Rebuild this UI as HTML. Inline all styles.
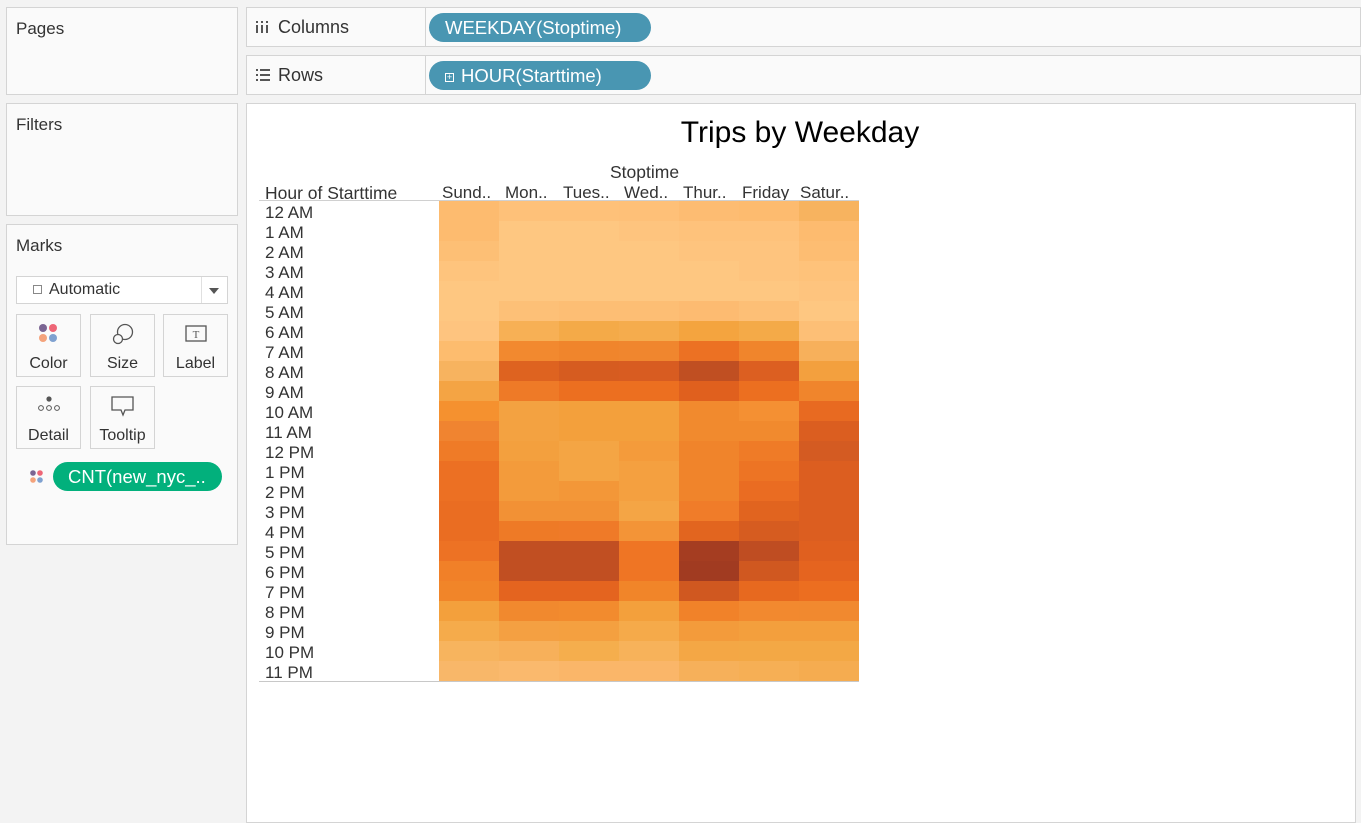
<!DOCTYPE html>
<html><head><meta charset="utf-8"><style>
*{margin:0;padding:0;box-sizing:border-box}
body{width:1361px;height:811px;background:#f3f3f3;font-family:"Liberation Sans",sans-serif;color:#333;position:relative;overflow:hidden}
.box{position:absolute;background:#fafafa;border:1px solid #d4d4d4}
.t{position:absolute;white-space:nowrap}
.pill{position:absolute;border-radius:15px;color:#fff;font-size:18.5px;line-height:29px;height:29px;white-space:nowrap}
.btn{position:absolute;width:65px;height:63px;border:1px solid #d4d4d4;background:#fafafa;font-size:16px;text-align:center}
.btn span{position:absolute;left:0;right:0;top:40px;line-height:18px}
#hm{position:absolute;left:439px;top:201px;width:420px;height:480px;display:grid;grid-template-columns:repeat(7,60px);grid-template-rows:repeat(24,20px)}
.rl{position:absolute;left:265px;font-size:17px;line-height:20px;color:#333;padding-top:2px}
.h{position:absolute;top:183px;font-size:17px;white-space:nowrap}
</style></head><body>
<div class="box" style="left:6px;top:7px;width:232px;height:88px"></div>
<div class="t" style="left:16px;top:19px;font-size:17px">Pages</div>
<div class="box" style="left:6px;top:103px;width:232px;height:113px"></div>
<div class="t" style="left:16px;top:115px;font-size:17px">Filters</div>
<div class="box" style="left:6px;top:224px;width:232px;height:321px"></div>
<div class="t" style="left:16px;top:236px;font-size:17px">Marks</div>
<div style="position:absolute;left:16px;top:276px;width:212px;height:28px;border:1px solid #d4d4d4;background:#fff"></div>
<div style="position:absolute;left:201px;top:277px;width:1px;height:26px;background:#e0e0e0"></div>
<div style="position:absolute;left:33px;top:285px;width:9px;height:9px;border:1px solid #888"></div>
<div class="t" style="left:49px;top:281px;font-size:16px">Automatic</div>
<div style="position:absolute;left:209px;top:288px;border-left:5px solid transparent;border-right:5px solid transparent;border-top:6px solid #555"></div>
<div class="btn" style="left:16px;top:314px"><svg width="22" height="22" viewBox="0 0 22 22" style="position:absolute;left:21px;top:8px"><circle cx="5" cy="5" r="4" fill="#7b6593"/><circle cx="15" cy="5" r="4" fill="#ee6677"/><circle cx="5" cy="15" r="4" fill="#f4a37c"/><circle cx="15" cy="15" r="4" fill="#7fa1d0"/></svg><span>Color</span></div>
<div class="btn" style="left:90px;top:314px"><svg width="24" height="24" viewBox="0 0 24 24" style="position:absolute;left:20px;top:7px"><circle cx="14" cy="10" r="7.5" fill="none" stroke="#555" stroke-width="1.3"/><circle cx="7" cy="17" r="4.5" fill="#fafafa" stroke="#555" stroke-width="1.3"/></svg><span>Size</span></div>
<div class="btn" style="left:163px;top:314px"><svg width="22" height="20" viewBox="0 0 22 20" style="position:absolute;left:21px;top:10px"><rect x="1" y="1" width="20" height="15" fill="none" stroke="#555" stroke-width="1.3"/><text x="11" y="13" font-size="11" text-anchor="middle" font-family="Liberation Serif" fill="#555">T</text></svg><span>Label</span></div>
<div class="btn" style="left:16px;top:386px"><svg width="26" height="20" viewBox="0 0 26 20" style="position:absolute;left:19px;top:8px"><circle cx="13" cy="4" r="2.6" fill="#555"/><circle cx="5" cy="13" r="2.4" fill="none" stroke="#555"/><circle cx="13" cy="13" r="2.4" fill="none" stroke="#555"/><circle cx="21" cy="13" r="2.4" fill="none" stroke="#555"/></svg><span>Detail</span></div>
<div class="btn" style="left:90px;top:386px"><svg width="24" height="22" viewBox="0 0 24 22" style="position:absolute;left:20px;top:9px"><path d="M1 1H22V14H14L12 19L10 14H1Z" fill="none" stroke="#555" stroke-width="1.3"/></svg><span>Tooltip</span></div>
<svg width="16" height="16" viewBox="0 0 16 16" style="position:absolute;left:29px;top:469px"><circle cx="4" cy="4" r="2.8" fill="#7b6593"/><circle cx="11" cy="4" r="2.8" fill="#ee6677"/><circle cx="4" cy="11" r="2.8" fill="#f4a37c"/><circle cx="11" cy="11" r="2.8" fill="#7fa1d0"/></svg>
<div class="pill" style="left:53px;top:462px;width:169px;background:#02b07c;padding-left:15px;font-size:18.5px">CNT(new_nyc_..</div>

<div class="box" style="left:246px;top:7px;width:1115px;height:40px"></div>
<div style="position:absolute;left:425px;top:8px;width:1px;height:38px;background:#d4d4d4"></div>
<svg width="12" height="12" viewBox="0 0 12 12" style="position:absolute;left:256px;top:21px"><rect x="0" y="0" width="2" height="2" fill="#555"/><rect x="0" y="4" width="2" height="8" fill="#555"/><rect x="5" y="0" width="2" height="2" fill="#555"/><rect x="5" y="4" width="2" height="8" fill="#555"/><rect x="10" y="0" width="2" height="2" fill="#555"/><rect x="10" y="4" width="2" height="8" fill="#555"/></svg>
<div class="t" style="left:278px;top:17px;font-size:18px">Columns</div>
<div class="pill" style="left:429px;top:13px;width:222px;background:#4996b2;padding-left:16px">WEEKDAY(Stoptime)</div>
<div class="box" style="left:246px;top:55px;width:1115px;height:40px"></div>
<div style="position:absolute;left:425px;top:56px;width:1px;height:38px;background:#d4d4d4"></div>
<svg width="14" height="12" viewBox="0 0 14 12" style="position:absolute;left:256px;top:69px"><rect x="0" y="0" width="2" height="2" fill="#555"/><rect x="4" y="0" width="10" height="2" fill="#555"/><rect x="0" y="5" width="2" height="2" fill="#555"/><rect x="4" y="5" width="10" height="2" fill="#555"/><rect x="0" y="10" width="2" height="2" fill="#555"/><rect x="4" y="10" width="10" height="2" fill="#555"/></svg>
<div class="t" style="left:278px;top:65px;font-size:18px">Rows</div>
<div class="pill" style="left:429px;top:61px;width:222px;background:#4996b2;padding-left:16px"><span style="display:inline-block;width:9px;height:9px;border:1px solid #fff;font-size:9px;line-height:7px;text-align:center;vertical-align:2px;margin-right:7px">+</span>HOUR(Starttime)</div>

<div style="position:absolute;left:246px;top:103px;width:1110px;height:720px;background:#fff;border:1px solid #d4d4d4"></div>
<div class="t" style="left:0;width:1600px;text-align:center;top:116px;font-size:30px;color:#000">Trips by Weekday</div>
<div class="t" style="left:610px;top:162px;font-size:17.5px">Stoptime</div>
<div class="h" style="left:265px;font-size:17.5px">Hour of Starttime</div>
<div class="h" style="left:442px">Sund..</div>
<div class="h" style="left:505px">Mon..</div>
<div class="h" style="left:563px">Tues..</div>
<div class="h" style="left:624px">Wed..</div>
<div class="h" style="left:683px">Thur..</div>
<div class="h" style="left:742px">Friday</div>
<div class="h" style="left:800px">Satur..</div>
<div style="position:absolute;left:259px;top:200px;width:600px;height:1px;background:#d0d0d0"></div>
<div style="position:absolute;left:259px;top:681px;width:600px;height:1px;background:#c8c8c8"></div>
<div class="rl" style="top:201px">12 AM</div><div class="rl" style="top:221px">1 AM</div><div class="rl" style="top:241px">2 AM</div><div class="rl" style="top:261px">3 AM</div><div class="rl" style="top:281px">4 AM</div><div class="rl" style="top:301px">5 AM</div><div class="rl" style="top:321px">6 AM</div><div class="rl" style="top:341px">7 AM</div><div class="rl" style="top:361px">8 AM</div><div class="rl" style="top:381px">9 AM</div><div class="rl" style="top:401px">10 AM</div><div class="rl" style="top:421px">11 AM</div>
<div class="rl" style="top:441px">12 PM</div><div class="rl" style="top:461px">1 PM</div><div class="rl" style="top:481px">2 PM</div><div class="rl" style="top:501px">3 PM</div><div class="rl" style="top:521px">4 PM</div><div class="rl" style="top:541px">5 PM</div><div class="rl" style="top:561px">6 PM</div><div class="rl" style="top:581px">7 PM</div><div class="rl" style="top:601px">8 PM</div><div class="rl" style="top:621px">9 PM</div><div class="rl" style="top:641px">10 PM</div><div class="rl" style="top:661px">11 PM</div>
<div id="hm">
<i style="background:#fdbb6f"></i><i style="background:#fec179"></i><i style="background:#fec179"></i><i style="background:#fec078"></i><i style="background:#fdbc72"></i><i style="background:#fdbb6f"></i><i style="background:#f7b35f"></i>
<i style="background:#fdbb6f"></i><i style="background:#fec781"></i><i style="background:#fec781"></i><i style="background:#fec47e"></i><i style="background:#fec27b"></i><i style="background:#fec27b"></i><i style="background:#fdbb6f"></i>
<i style="background:#fdbf75"></i><i style="background:#fec781"></i><i style="background:#fec781"></i><i style="background:#fec781"></i><i style="background:#fec47e"></i><i style="background:#fec47e"></i><i style="background:#fdbd72"></i>
<i style="background:#fec47d"></i><i style="background:#fec781"></i><i style="background:#fec781"></i><i style="background:#fec781"></i><i style="background:#fec781"></i><i style="background:#fec47e"></i><i style="background:#fec27a"></i>
<i style="background:#fec781"></i><i style="background:#fec781"></i><i style="background:#fec781"></i><i style="background:#fec781"></i><i style="background:#fec781"></i><i style="background:#fec781"></i><i style="background:#fec47e"></i>
<i style="background:#fec781"></i><i style="background:#fdc077"></i><i style="background:#fdbe74"></i><i style="background:#fdbe74"></i><i style="background:#fdbb71"></i><i style="background:#fdbf76"></i><i style="background:#fec781"></i>
<i style="background:#fec47f"></i><i style="background:#f7b055"></i><i style="background:#f4aa48"></i><i style="background:#f5ac4d"></i><i style="background:#f4a43f"></i><i style="background:#f4aa48"></i><i style="background:#fdbf76"></i>
<i style="background:#fdbc6e"></i><i style="background:#f2892f"></i><i style="background:#f0852c"></i><i style="background:#f0862e"></i><i style="background:#ec7123"></i><i style="background:#f0852c"></i><i style="background:#f7b05b"></i>
<i style="background:#f7b35f"></i><i style="background:#de6320"></i><i style="background:#d65c20"></i><i style="background:#d85c21"></i><i style="background:#c04f22"></i><i style="background:#dc5f21"></i><i style="background:#f3a03e"></i>
<i style="background:#f4a444"></i><i style="background:#ee7a27"></i><i style="background:#ec6f20"></i><i style="background:#ec6f20"></i><i style="background:#e0601e"></i><i style="background:#ec6f20"></i><i style="background:#f0852c"></i>
<i style="background:#f5912f"></i><i style="background:#f3a241"></i><i style="background:#f3a03c"></i><i style="background:#f3a03c"></i><i style="background:#f18a2e"></i><i style="background:#f49033"></i><i style="background:#e86a21"></i>
<i style="background:#f08430"></i><i style="background:#f3a241"></i><i style="background:#f3a03c"></i><i style="background:#f3a03c"></i><i style="background:#f18a2e"></i><i style="background:#f18a2e"></i><i style="background:#db5e20"></i>
<i style="background:#ef7b27"></i><i style="background:#f3a03e"></i><i style="background:#f4a544"></i><i style="background:#f49b3b"></i><i style="background:#f0842b"></i><i style="background:#ef7b27"></i><i style="background:#d45b22"></i>
<i style="background:#ec7023"></i><i style="background:#f39b3b"></i><i style="background:#f4a544"></i><i style="background:#f4a040"></i><i style="background:#f0842b"></i><i style="background:#ed7424"></i><i style="background:#dc5e20"></i>
<i style="background:#ec7023"></i><i style="background:#f39b3b"></i><i style="background:#f39738"></i><i style="background:#f4a040"></i><i style="background:#f0842b"></i><i style="background:#ea6c22"></i><i style="background:#dc5e20"></i>
<i style="background:#ea6d22"></i><i style="background:#f29135"></i><i style="background:#f29135"></i><i style="background:#f4a545"></i><i style="background:#f07c29"></i><i style="background:#e1641f"></i><i style="background:#dc5e20"></i>
<i style="background:#ea6d22"></i><i style="background:#ee7a26"></i><i style="background:#ef7a28"></i><i style="background:#f39437"></i><i style="background:#e2651f"></i><i style="background:#d65c20"></i><i style="background:#dc5e20"></i>
<i style="background:#ed7224"></i><i style="background:#c14f22"></i><i style="background:#c14f22"></i><i style="background:#ef7524"></i><i style="background:#a53d21"></i><i style="background:#bf4d22"></i><i style="background:#e0601f"></i>
<i style="background:#f18028"></i><i style="background:#c14f22"></i><i style="background:#c14f22"></i><i style="background:#ef7524"></i><i style="background:#a13b21"></i><i style="background:#d05820"></i><i style="background:#e5641f"></i>
<i style="background:#f18529"></i><i style="background:#e4641f"></i><i style="background:#e4641f"></i><i style="background:#f18529"></i><i style="background:#d05820"></i><i style="background:#e7691f"></i><i style="background:#ec6e20"></i>
<i style="background:#f3a03c"></i><i style="background:#f1892e"></i><i style="background:#f28b2e"></i><i style="background:#f3a03c"></i><i style="background:#f18229"></i><i style="background:#f2892f"></i><i style="background:#f1892f"></i>
<i style="background:#f5ab4b"></i><i style="background:#f4a042"></i><i style="background:#f4a040"></i><i style="background:#f5aa4a"></i><i style="background:#f39b3b"></i><i style="background:#f39f3d"></i><i style="background:#f39f3d"></i>
<i style="background:#f7b45e"></i><i style="background:#f7b05a"></i><i style="background:#f5ae4d"></i><i style="background:#f7b25a"></i><i style="background:#f4a745"></i><i style="background:#f3a845"></i><i style="background:#f3a845"></i>
<i style="background:#f8b769"></i><i style="background:#fab96d"></i><i style="background:#fab669"></i><i style="background:#fab669"></i><i style="background:#f6b05a"></i><i style="background:#f6af55"></i><i style="background:#f5ac50"></i>
</div>
</body></html>
